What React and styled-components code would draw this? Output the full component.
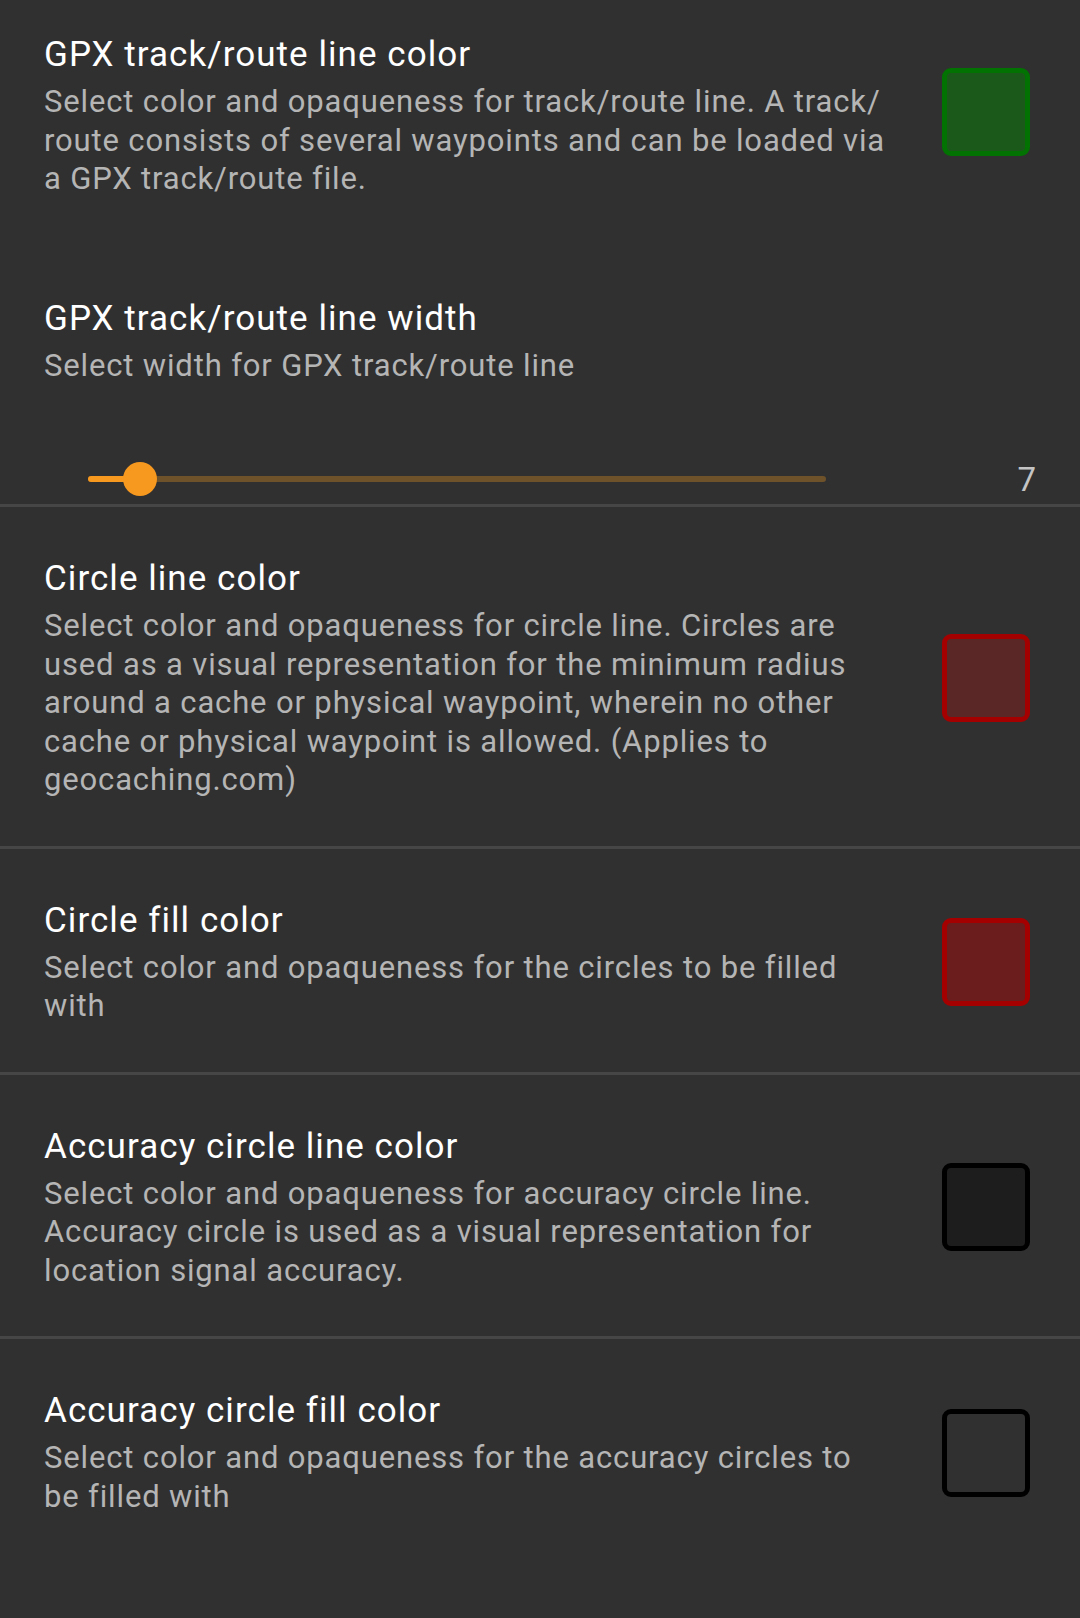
import React from "react";
import styled, { createGlobalStyle } from "styled-components";

const prefs = [
  {
    title: "GPX track/route line color",
    summary: (
      <>
        Select color and opaqueness for track/route line. A track/<wbr />route
        consists of several waypoints and can be loaded via a GPX track/<wbr />route
        file.
      </>
    ),
    border: "#027302",
    fill: "#1b591b",
    top: 33,
    bottom: 44,
    lift: 7,
  },
  {
    title: "Circle line color",
    summary:
      "Select color and opaqueness for circle line. Circles are used as a visual representation for the minimum radius around a cache or physical waypoint, wherein no other cache or physical waypoint is allowed. (Applies to geocaching.com)",
    border: "#a50000",
    fill: "#5a2626",
    divider: true,
  },
  {
    title: "Circle fill color",
    summary: "Select color and opaqueness for the circles to be filled with",
    border: "#a50000",
    fill: "#6b1c1c",
    divider: true,
  },
  {
    title: "Accuracy circle line color",
    summary:
      "Select color and opaqueness for accuracy circle line. Accuracy circle is used as a visual representation for location signal accuracy.",
    border: "#000000",
    fill: "#1d1d1d",
    divider: true,
  },
  {
    title: "Accuracy circle fill color",
    summary:
      "Select color and opaqueness for the accuracy circles to be filled with",
    border: "#000000",
    fill: "transparent",
    divider: true,
  },
];

export default function App() {
  const [first, ...rest] = prefs;
  const width = 7;
  return (
    <>
      <GlobalStyle />
      <Screen>
        <ColorPref {...first} />
        <SeekPref>
          <Title>GPX track/route line width</Title>
          <Summary>Select width for GPX track/route line</Summary>
          <SliderRow>
            <Track>
              <ActiveTrack style={{ width: `${width}%` }} />
              <Thumb style={{ left: `${width}%` }} />
            </Track>
            <SliderValue>{width}</SliderValue>
          </SliderRow>
        </SeekPref>
        {rest.map(p => (
          <ColorPref key={p.title} {...p} />
        ))}
      </Screen>
    </>
  );
}

function ColorPref({ title, summary, border, fill, divider, top, bottom, lift }) {
  return (
    <Pref $divider={divider} $top={top} $bottom={bottom}>
      <TextBlock>
        <Title>{title}</Title>
        <Summary>{summary}</Summary>
      </TextBlock>
      <Swatch $border={border} $fill={fill} $lift={lift} />
    </Pref>
  );
}

const GlobalStyle = createGlobalStyle`
  html, body {
    margin: 0;
    padding: 0;
    background: #303030;
  }
  body {
    font-family: Roboto, "Liberation Sans", sans-serif;
  }
`;

const Screen = styled.div`
  display: flex;
  flex-direction: column;
  min-height: 1618px;
  background: #303030;
`;

const Pref = styled.div`
  display: flex;
  align-items: center;
  padding: ${p => p.$top ?? 50}px 50px ${p => p.$bottom ?? 46}px 44px;
  border-top: ${p => (p.$divider ? "3px solid #464646" : "none")};
`;

const SeekPref = styled.div`
  display: flex;
  flex-direction: column;
  padding: 54px 0 0 44px;
`;

const TextBlock = styled.div`
  flex: 1;
  min-width: 0;
`;

const Title = styled.div`
  font-size: 35px;
  line-height: 44px;
  color: #ffffff;
  letter-spacing: 1.05px;
`;

const Summary = styled.div`
  margin-top: 6px;
  font-size: 31px;
  line-height: 38.5px;
  letter-spacing: 0.85px;
  color: #b5b5b5;
`;

const Swatch = styled.div`
  flex: none;
  box-sizing: border-box;
  width: 88px;
  height: 88px;
  margin-left: 50px;
  margin-bottom: ${p => p.$lift ?? 0}px;
  border: 5px solid ${p => p.$border};
  border-radius: 9px;
  background: ${p => p.$fill};
`;

const SliderRow = styled.div`
  display: flex;
  align-items: center;
  height: 50px;
  margin-top: 69px;
  padding: 0 44px 0 44px;
`;

const Track = styled.div`
  position: relative;
  width: 738px;
  height: 6px;
  border-radius: 3px;
  background: #6e522a;
`;

const ActiveTrack = styled.div`
  height: 100%;
  border-radius: 3px;
  background: #f7981f;
`;

const Thumb = styled.div`
  position: absolute;
  top: 50%;
  width: 34px;
  height: 34px;
  border-radius: 50%;
  background: #f7981f;
  transform: translate(-50%, -50%);
`;

const SliderValue = styled.div`
  flex: 1;
  text-align: right;
  font-size: 33px;
  color: #c4c4c4;
`;
